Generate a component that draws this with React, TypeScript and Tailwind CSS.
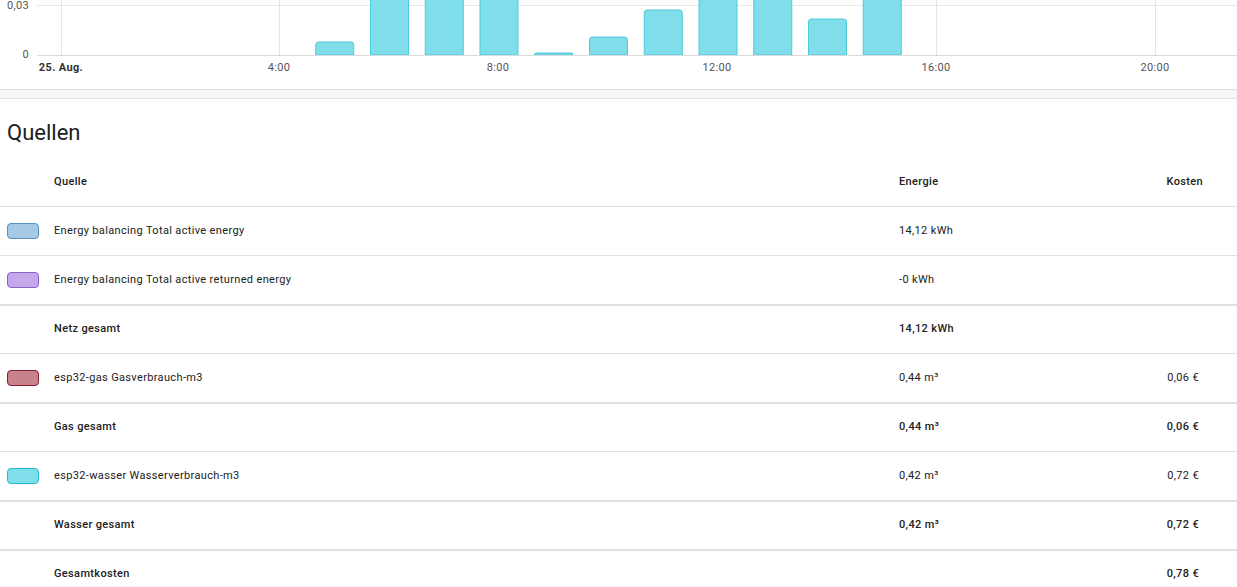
import React from 'react';

type Row = {
  name: string;
  energy: string;
  cost?: string;
  swatch?: { bg: string; border: string };
  total?: boolean;
};

// hourly water use, bar top y in the plot (negative = taller than the visible area)
const bars: { hour: number; top: number }[] = [
  { hour: 5, top: 42 },
  { hour: 6, top: -20 },
  { hour: 7, top: -20 },
  { hour: 8, top: -20 },
  { hour: 9, top: 53 },
  { hour: 10, top: 37 },
  { hour: 11, top: 10 },
  { hour: 12, top: -20 },
  { hour: 13, top: -20 },
  { hour: 14, top: 19 },
  { hour: 15, top: -20 },
];

const ticks = [
  { x: 61, label: '25. Aug.', bold: true },
  { x: 279, label: '4:00' },
  { x: 498, label: '8:00' },
  { x: 717, label: '12:00' },
  { x: 936, label: '16:00' },
  { x: 1155, label: '20:00' },
];

const rows: Row[] = [
  {
    name: 'Energy balancing Total active energy',
    energy: '14,12 kWh',
    swatch: { bg: 'bg-[#a6c9e5]', border: 'border-[#5b8fbd]' },
  },
  {
    name: 'Energy balancing Total active returned energy',
    energy: '-0 kWh',
    swatch: { bg: 'bg-[#c4a9ea]', border: 'border-[#8c61c7]' },
  },
  { name: 'Netz gesamt', energy: '14,12 kWh', total: true },
  {
    name: 'esp32-gas Gasverbrauch-m3',
    energy: '0,44 m³',
    cost: '0,06 €',
    swatch: { bg: 'bg-[#c8828c]', border: 'border-[#8a1c33]' },
  },
  { name: 'Gas gesamt', energy: '0,44 m³', cost: '0,06 €', total: true },
  {
    name: 'esp32-wasser Wasserverbrauch-m3',
    energy: '0,42 m³',
    cost: '0,72 €',
    swatch: { bg: 'bg-[#80deea]', border: 'border-[#2bb7ca]' },
  },
  { name: 'Wasser gesamt', energy: '0,42 m³', cost: '0,72 €', total: true },
  { name: 'Gesamtkosten', energy: '', cost: '0,78 €', total: true },
];

const HOUR = 54.75;
const BASE = 55;

function barPath(cx: number, top: number) {
  const l = cx - 19;
  const r = cx + 19;
  const rad = Math.min(3, (BASE - top) / 2);
  return `M${l},${BASE} L${l},${top + rad} Q${l},${top} ${l + rad},${top} L${r - rad},${top} Q${r},${top} ${r},${top + rad} L${r},${BASE} Z`;
}

function UsageChart() {
  return (
    <svg width="1237" height="89" className="block" style={{ fontFamily: 'Roboto, sans-serif' }}>
      <line x1="37" x2="1237" y1="5.5" y2="5.5" stroke="#e8e8e8" />
      {ticks.map((t) => (
        <line key={t.x} x1={t.x + 0.5} x2={t.x + 0.5} y1="0" y2={BASE} stroke="#e6e6e6" />
      ))}
      {bars.map((b) => (
        <path
          key={b.hour}
          d={barPath(61 + HOUR * b.hour, b.top)}
          fill="#7fdeea"
          stroke="#4ccbdc"
          strokeWidth="1"
        />
      ))}
      <line x1="37" x2="1237" y1={BASE + 0.5} y2={BASE + 0.5} stroke="#dadada" />
      <text x="29" y="9" textAnchor="end" fontSize="11" fill="#555">0,03</text>
      <text x="29" y="58" textAnchor="end" fontSize="11" fill="#555">0</text>
      {ticks.map((t) => (
        <text
          key={t.label}
          x={t.x}
          y="71"
          textAnchor="middle"
          fontSize="11"
          fontWeight={t.bold ? 700 : 400}
          fill={t.bold ? '#333' : '#555'}
        >
          {t.label}
        </text>
      ))}
    </svg>
  );
}

function SourceRow({ row }: { row: Row }) {
  return (
    <div
      className={`flex h-[49px] items-center border-b border-[#e0e0e0] ${
        row.total ? 'border-t border-t-[#e0e0e0] font-medium' : ''
      }`}
    >
      <div className="w-[54px] pl-[7px]">
        {row.swatch && (
          <div className={`h-[16px] w-[32px] rounded-[4px] border ${row.swatch.bg} ${row.swatch.border}`} />
        )}
      </div>
      <div className="w-[845px]">{row.name}</div>
      <div className="flex-1">{row.energy}</div>
      <div className="w-[120px] pr-[38px] text-right">{row.cost}</div>
    </div>
  );
}

export default function App() {
  return (
    <div
      className="flex w-[1237px] flex-col gap-[8px] bg-[#f7f7f7] text-[11px] tracking-[0.35px] text-[#212121]"
      style={{ fontFamily: 'Roboto, "Noto Sans", sans-serif' }}
    >
      <div className="border-b border-[#e0e0e0] bg-white">
        <UsageChart />
      </div>
      <div className="border-t border-[#e0e0e0] bg-white">
        <h2 className="pl-[7px] pt-[20px] text-[22px] font-normal leading-[28px] tracking-normal text-[#212121]">
          Quellen
        </h2>
        <div className="mt-[11px]">
          <div className="flex h-[49px] items-center border-b border-[#e0e0e0] font-medium">
            <div className="w-[54px]" />
            <div className="w-[845px]">Quelle</div>
            <div className="flex-1">Energie</div>
            <div className="w-[120px] pr-[34px] text-right">Kosten</div>
          </div>
          {rows.map((r) => (
            <SourceRow key={r.name} row={r} />
          ))}
        </div>
      </div>
    </div>
  );
}
